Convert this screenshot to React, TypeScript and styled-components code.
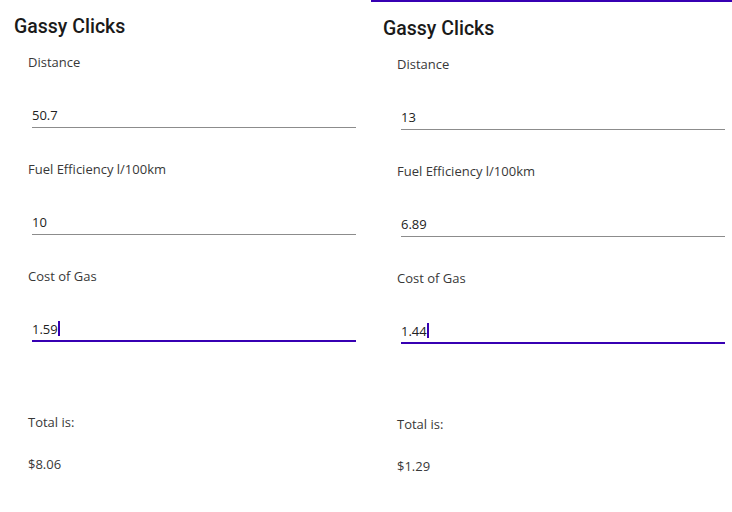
import React from "react";
import styled, { createGlobalStyle } from "styled-components";

const Global = createGlobalStyle`
  html, body { margin: 0; padding: 0; background: #ffffff; }
  body { font-family: "Open Sans", "Liberation Sans", sans-serif; }
`;

const ACCENT = "#3700b3";

const Page = styled.div`
  display: flex;
  width: 732px;
  height: 512px;
  background: #ffffff;
  overflow: hidden;
`;

const Panel = styled.section<{ $active?: boolean }>`
  display: flex;
  flex-direction: column;
  width: ${(p) => (p.$active ? 363 : 369)}px;
  flex: none;
  padding-top: ${(p) => (p.$active ? 0 : 15)}px;
`;

const AccentBar = styled.div`
  height: 2px;
  margin-left: 2px;
  margin-bottom: 15px;
  background: ${ACCENT};
`;

const Title = styled.h1`
  margin: 0 0 14px 14px;
  font-family: Roboto, "Liberation Sans", sans-serif;
  font-weight: 500;
  font-size: 19.5px;
  line-height: 24px;
  color: #1a1a1a;
`;

const Form = styled.div`
  display: flex;
  flex-direction: column;
  gap: 32px;
  margin-left: 28px;
`;

const Field = styled.div`
  display: flex;
  flex-direction: column;
`;

const Label = styled.div`
  font-size: 13px;
  line-height: 18px;
  color: #383838;
  margin-bottom: 35px;
`;

const Input = styled.div<{ $focused?: boolean }>`
  display: flex;
  align-items: center;
  margin-left: 4px;
  width: 324px;
  font-size: 13px;
  line-height: 18px;
  color: #222222;
  padding-bottom: ${(p) => (p.$focused ? 2 : 3)}px;
  border-bottom: ${(p) => (p.$focused ? `2px solid ${ACCENT}` : "1px solid #8c8c8c")};
`;

const Caret = styled.span`
  display: inline-block;
  width: 2px;
  height: 15px;
  background: ${ACCENT};
  transform: translateY(-1px);
`;

const Result = styled.div`
  display: flex;
  flex-direction: column;
  margin: 71px 0 0 28px;
`;

const ResultLabel = styled.div`
  font-size: 13px;
  line-height: 18px;
  color: #383838;
  margin-bottom: 24px;
`;

const ResultValue = styled.div`
  font-size: 13px;
  line-height: 18px;
  color: #383838;
`;

type Data = {
  distance: string;
  efficiency: string;
  cost: string;
  total: string;
};

const Calculator = ({ data, active }: { data: Data; active?: boolean }) => (
  <Panel $active={active}>
    {active && <AccentBar />}
    <Title>Gassy Clicks</Title>
    <Form>
      <Field>
        <Label>Distance</Label>
        <Input>{data.distance}</Input>
      </Field>
      <Field>
        <Label>Fuel Efficiency l/100km</Label>
        <Input>{data.efficiency}</Input>
      </Field>
      <Field>
        <Label>Cost of Gas</Label>
        <Input $focused>
          {data.cost}
          <Caret />
        </Input>
      </Field>
    </Form>
    <Result>
      <ResultLabel>Total is:</ResultLabel>
      <ResultValue>{data.total}</ResultValue>
    </Result>
  </Panel>
);

export default function App() {
  return (
    <>
      <Global />
      <Page>
        <Calculator data={{ distance: "50.7", efficiency: "10", cost: "1.59", total: "$8.06" }} />
        <Calculator
          active
          data={{ distance: "13", efficiency: "6.89", cost: "1.44", total: "$1.29" }}
        />
      </Page>
    </>
  );
}
